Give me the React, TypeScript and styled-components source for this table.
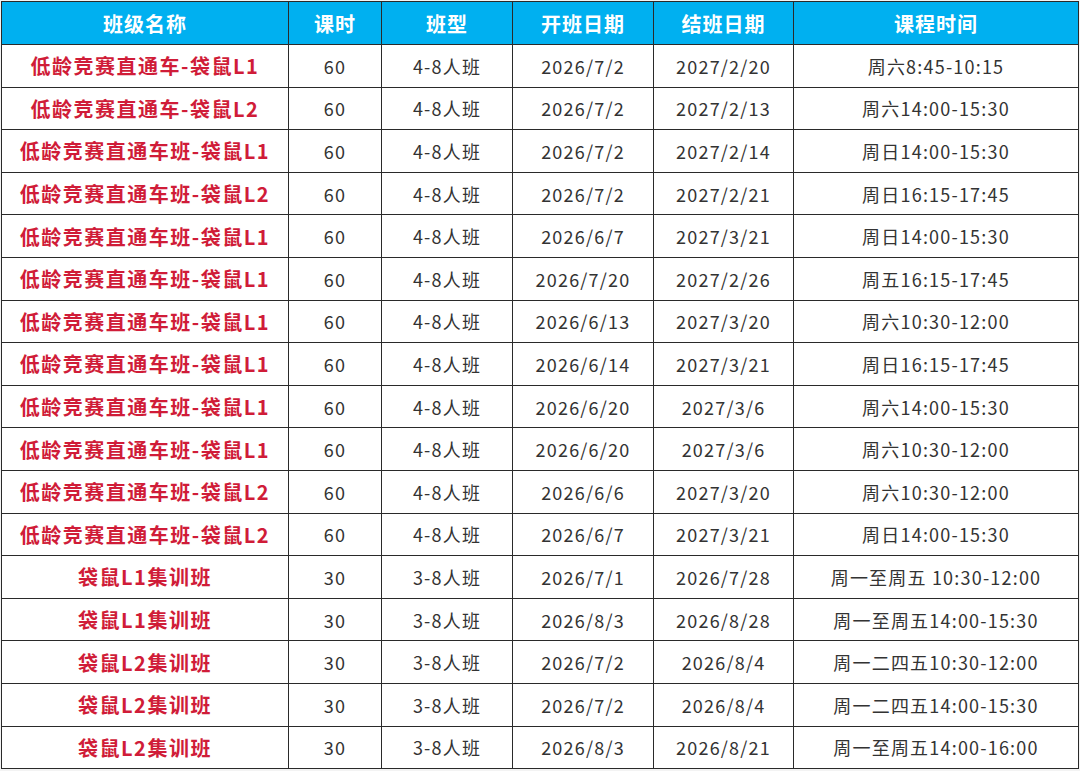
import React from "react";
import styled, { createGlobalStyle } from "styled-components";

const Global = createGlobalStyle`
  html, body { margin: 0; padding: 0; background: #ffffff; }
  body { font-family: "Noto Sans CJK SC", "Noto Sans", sans-serif; }
`;

const Page = styled.div`
  width: 1080px;
  height: 771px;
  padding: 1px 0 0 1px;
  box-sizing: border-box;
  background: #f3f3f3;
`;

const Table = styled.table`
  width: 1077px;
  table-layout: fixed;
  border-collapse: collapse;
  background: #ffffff;
`;

const HeadRow = styled.tr`
  height: 43px;
`;

const BodyRow = styled.tr`
  height: 42.6px;
`;

const HeadCell = styled.th`
  background: #00b0f0;
  color: #ffffff;
  font-weight: 700;
  font-size: 20px;
  letter-spacing: 1px;
  border: 1px solid #2a2a2a;
  text-align: center;
  vertical-align: middle;
  padding: 0;
`;

const Cell = styled.td<{ $name?: boolean }>`
  border: 1px solid #2a2a2a;
  text-align: center;
  vertical-align: middle;
  padding: 0;
  white-space: nowrap;
  color: ${(p) => (p.$name ? "#d01c38" : "#333333")};
  font-weight: ${(p) => (p.$name ? 700 : 400)};
  font-size: ${(p) => (p.$name ? "20px" : "18px")};
  letter-spacing: ${(p) => (p.$name ? "1.5px" : "1.2px")};
`;

const widths = [287, 93, 131, 141, 140, 285];
const headers = ["班级名称", "课时", "班型", "开班日期", "结班日期", "课程时间"];

const A = "低龄竞赛直通车班-袋鼠";
const rows: string[][] = [
  ["低龄竞赛直通车-袋鼠L1", "60", "4-8人班", "2026/7/2", "2027/2/20", "周六8:45-10:15"],
  ["低龄竞赛直通车-袋鼠L2", "60", "4-8人班", "2026/7/2", "2027/2/13", "周六14:00-15:30"],
  [A + "L1", "60", "4-8人班", "2026/7/2", "2027/2/14", "周日14:00-15:30"],
  [A + "L2", "60", "4-8人班", "2026/7/2", "2027/2/21", "周日16:15-17:45"],
  [A + "L1", "60", "4-8人班", "2026/6/7", "2027/3/21", "周日14:00-15:30"],
  [A + "L1", "60", "4-8人班", "2026/7/20", "2027/2/26", "周五16:15-17:45"],
  [A + "L1", "60", "4-8人班", "2026/6/13", "2027/3/20", "周六10:30-12:00"],
  [A + "L1", "60", "4-8人班", "2026/6/14", "2027/3/21", "周日16:15-17:45"],
  [A + "L1", "60", "4-8人班", "2026/6/20", "2027/3/6", "周六14:00-15:30"],
  [A + "L1", "60", "4-8人班", "2026/6/20", "2027/3/6", "周六10:30-12:00"],
  [A + "L2", "60", "4-8人班", "2026/6/6", "2027/3/20", "周六10:30-12:00"],
  [A + "L2", "60", "4-8人班", "2026/6/7", "2027/3/21", "周日14:00-15:30"],
  ["袋鼠L1集训班", "30", "3-8人班", "2026/7/1", "2026/7/28", "周一至周五 10:30-12:00"],
  ["袋鼠L1集训班", "30", "3-8人班", "2026/8/3", "2026/8/28", "周一至周五14:00-15:30"],
  ["袋鼠L2集训班", "30", "3-8人班", "2026/7/2", "2026/8/4", "周一二四五10:30-12:00"],
  ["袋鼠L2集训班", "30", "3-8人班", "2026/7/2", "2026/8/4", "周一二四五14:00-15:30"],
  ["袋鼠L2集训班", "30", "3-8人班", "2026/8/3", "2026/8/21", "周一至周五14:00-16:00"],
];

export default function App() {
  return (
    <>
      <Global />
      <Page>
        <Table>
          <colgroup>
            {widths.map((w, i) => (
              <col key={i} style={{ width: w }} />
            ))}
          </colgroup>
          <thead>
            <HeadRow>
              {headers.map((h) => (
                <HeadCell key={h}>{h}</HeadCell>
              ))}
            </HeadRow>
          </thead>
          <tbody>
            {rows.map((r, i) => (
              <BodyRow key={i}>
                {r.map((c, j) => (
                  <Cell key={j} $name={j === 0}>
                    {c}
                  </Cell>
                ))}
              </BodyRow>
            ))}
          </tbody>
        </Table>
      </Page>
    </>
  );
}
